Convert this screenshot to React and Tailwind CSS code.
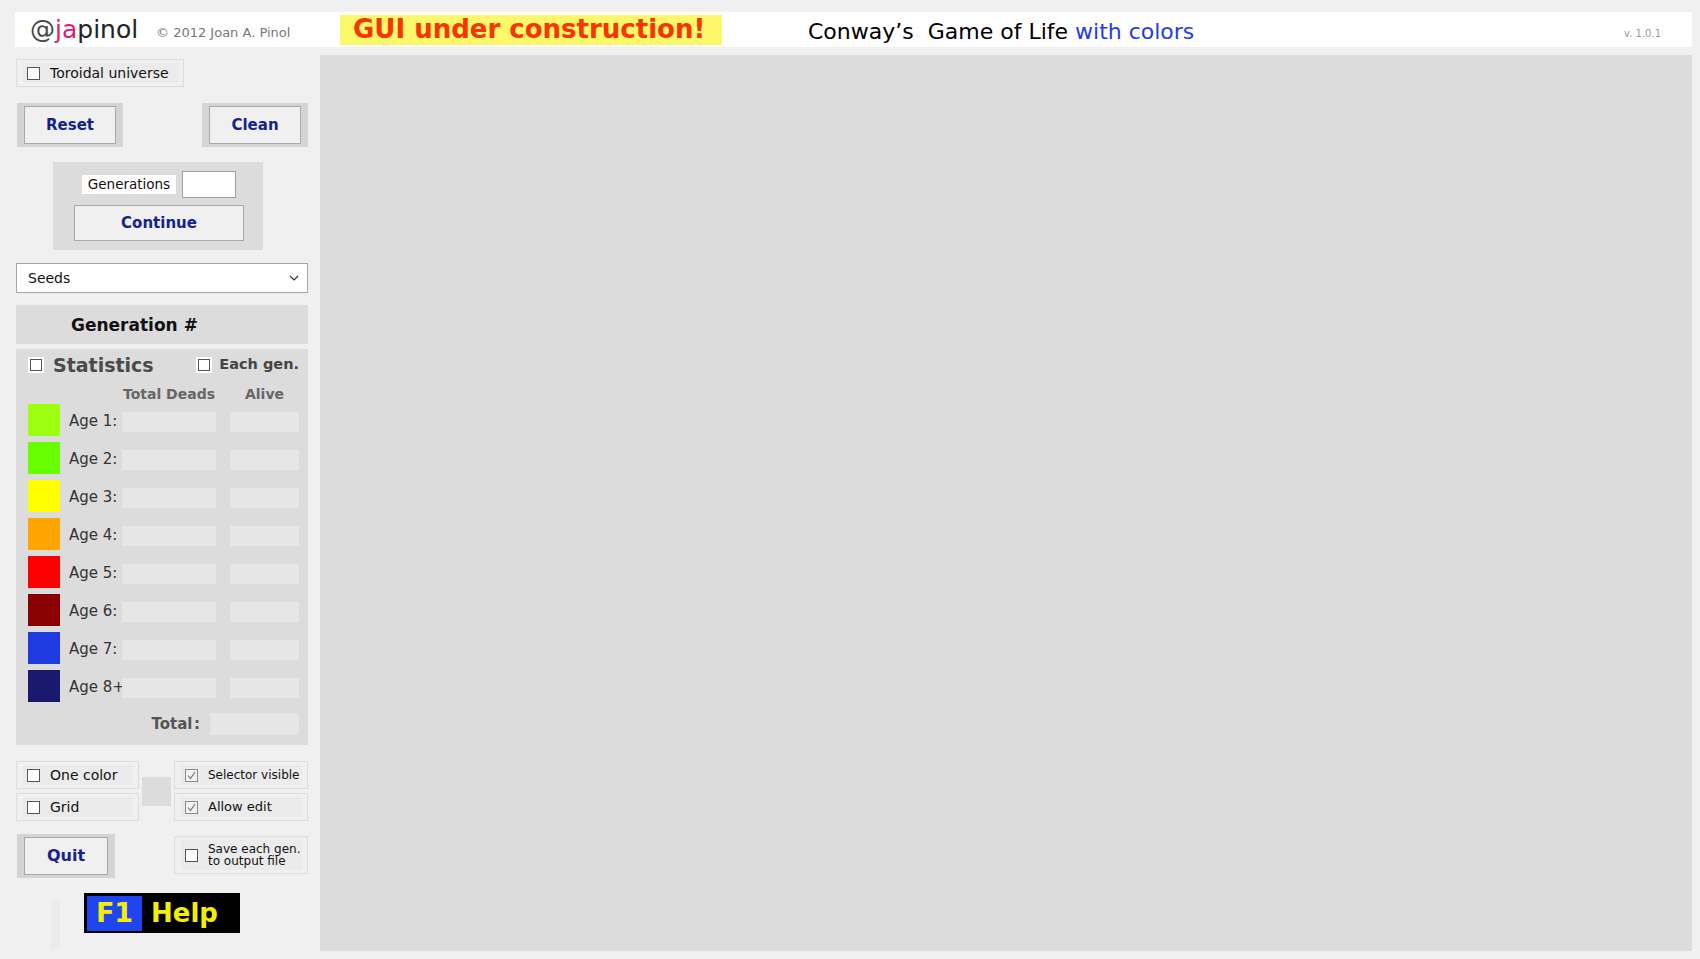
import React from 'react';

const ages = [
  { label: 'Age 1:', color: 'bg-[#9cff10]' },
  { label: 'Age 2:', color: 'bg-[#66ff00]' },
  { label: 'Age 3:', color: 'bg-[#ffff00]' },
  { label: 'Age 4:', color: 'bg-[#ffa500]' },
  { label: 'Age 5:', color: 'bg-[#ff0000]' },
  { label: 'Age 6:', color: 'bg-[#8b0000]' },
  { label: 'Age 7:', color: 'bg-[#1e3ae0]' },
  { label: 'Age 8+', color: 'bg-[#191970]' },
];

const Box = ({ checked }) =>
  checked ? (
    <span className="flex h-[13px] w-[13px] shrink-0 items-center justify-center border border-[#8a8a8a] bg-[#f2f2f2]">
      <svg width="9" height="9" viewBox="0 0 9 9" fill="none">
        <path d="M1 4.5 L3.5 7.5 L8 1" stroke="#6f6f6f" strokeWidth="1.1" />
      </svg>
    </span>
  ) : (
    <span className="block h-[13px] w-[13px] shrink-0 border border-[#555] bg-white" />
  );

const CheckOption = ({ checked, children, className = '', textClass = 'text-[14px]' }) => (
  <div className={`border border-[#dcdcdc] bg-[#f0f0f0] p-[3px] pl-[6px] pr-[5px] ${className}`}>
    <div className="flex h-full items-center bg-[#ebebeb] pl-[4px]">
      <Box checked={checked} />
      <span className={`ml-[10px] leading-[12px] text-[#111] ${textClass}`}>{children}</span>
    </div>
  </div>
);

const Button = ({ children, className = '' }) => (
  <div className={`flex items-center justify-center border border-[#a9a9a9] bg-[#f0f0f0] text-[15px] font-bold text-[#14238c] ${className}`}>
    {children}
  </div>
);

const WhiteCheck = () => (
  <span className="flex h-4 w-4 items-center justify-center bg-white">
    <span className="block h-[12px] w-[12px] border border-[#555]" />
  </span>
);

export default function App() {
  return (
    <div className="min-h-screen bg-[#f0f0f0] pl-[15px] pr-[8px] pt-3 font-['DejaVu_Sans',sans-serif] text-[#111]">
      {/* Header */}
      <div className="flex h-[35px] items-center bg-white pr-[31px]">
        <div className="w-[141px] pl-[15px] text-[25px] leading-none text-[#222]">
          <span className="text-[#444]">@</span>
          <span className="text-[#e8196b]">ja</span>pinol
        </div>
        <div className="w-[184px] pt-[6px] text-[13px] text-[#777]">© 2012 Joan A. Pinol</div>
        <div className="flex h-[30px] w-[382px] items-center bg-[#fcf86a] pl-[13px] text-[26px] font-bold text-[#f83400]">
          GUI under construction!
        </div>
        <div className="ml-[86px] pt-[4px] text-[22px] text-black">
          Conway’s&nbsp; Game of Life <span className="text-[#1f3ce6]">with colors</span>
        </div>
        <div className="ml-auto pt-[8px] text-[10px] text-[#999]">v. 1.0.1</div>
      </div>

      {/* Body */}
      <div className="mt-2 flex">
        {/* Left panel */}
        <div className="ml-[1px] flex w-[292px] shrink-0 flex-col">
          <CheckOption className="mt-[4px] h-[28px] w-[168px]">Toroidal universe</CheckOption>

          <div className="mt-[16px] flex justify-between">
            <div className="ml-[1px] h-[44px] w-[106px] bg-[#d4d4d4] px-[7px] py-[3px]">
              <Button className="h-full">Reset</Button>
            </div>
            <div className="h-[44px] w-[106px] bg-[#d4d4d4] px-[7px] py-[3px]">
              <Button className="h-full">Clean</Button>
            </div>
          </div>

          <div className="ml-[37px] mt-[15px] w-[210px] bg-[#dcdcdc] pb-[9px] pt-[9px]">
            <div className="flex h-[27px] items-center pl-[29px]">
              <span className="flex h-[19px] w-[94px] items-center justify-center bg-white text-[13.5px]">Generations</span>
              <span className="ml-[6px] h-[27px] w-[54px] border border-[#a0a0a0] bg-white" />
            </div>
            <Button className="ml-[21px] mt-[7px] h-[36px] w-[170px]">Continue</Button>
          </div>

          <div className="mt-[13px] flex h-[30px] items-center justify-between border border-[#a5a5a5] bg-white pl-[11px] pr-[8px] text-[14px]">
            <span>Seeds</span>
            <svg width="10" height="6" viewBox="0 0 10 6" fill="none">
              <path d="M1 1 L5 5 L9 1" stroke="#333" strokeWidth="1.2" />
            </svg>
          </div>

          <div className="mt-[12px] flex h-[39px] items-center bg-[#dcdcdc] pl-[55px] pt-[3px] text-[17px] font-bold text-[#111]">
            Generation #
          </div>

          {/* Statistics */}
          <div className="mt-[5px] bg-[#dcdcdc] pb-[10px] pl-[12px] pr-[9px] pt-[8px]">
            <div className="flex h-4 items-center">
              <WhiteCheck />
              <span className="ml-[9px] text-[19px] font-bold text-[#4a4a4a]">Statistics</span>
              <span className="ml-auto flex items-center">
                <WhiteCheck />
                <span className="ml-[7px] text-[14.5px] font-bold text-[#444]">Each gen.</span>
              </span>
            </div>
            <div className="flex h-[31px] items-end pb-[1px] pl-[94px] text-[14px] font-bold leading-[17px] text-[#666]">
              <span className="w-[94px] text-center">Total Deads</span>
              <span className="ml-[14px] w-[69px] text-center">Alive</span>
            </div>
            <div className="flex flex-col gap-[6px]">
              {ages.map((a) => (
                <div key={a.label} className="flex h-8 items-start">
                  <span className={`h-8 w-8 ${a.color}`} />
                  <span className="ml-[9px] mt-[8px] w-[53px] whitespace-nowrap text-[15px] leading-[18px] text-[#333]">
                    {a.label}
                  </span>
                  <span className="mt-[8px] h-5 w-[94px] bg-[#e6e6e6]" />
                  <span className="ml-[14px] mt-[8px] h-5 w-[69px] bg-[#e6e6e6]" />
                </div>
              ))}
            </div>
            <div className="mt-[11px] flex h-[22px] items-center justify-end">
              <span className="text-[15px] font-bold text-[#555]">Total&#8202;:</span>
              <span className="ml-[10px] h-[22px] w-[89px] bg-[#e6e6e6]" />
            </div>
          </div>

          {/* Options */}
          <div className="mt-[16px] flex">
            <div className="flex w-[123px] flex-col gap-[4px]">
              <CheckOption className="h-[28px]">One color</CheckOption>
              <CheckOption className="h-[28px]">Grid</CheckOption>
            </div>
            <span className="ml-[3px] h-[29px] w-[29px] self-center bg-[#dcdcdc]" />
            <div className="ml-[3px] flex w-[134px] flex-col gap-[4px]">
              <CheckOption checked className="h-[28px]" textClass="text-[12px]">Selector visible</CheckOption>
              <CheckOption checked className="h-[28px]" textClass="text-[13px]">Allow edit</CheckOption>
            </div>
          </div>

          <div className="mt-[13px] flex items-start">
            <div className="ml-[1px] h-[44px] w-[98px] bg-[#d4d4d4] px-[7px] py-[3px]">
              <Button className="h-full text-[16px]">Quit</Button>
            </div>
            <CheckOption className="ml-auto mt-[2px] h-[38px] w-[134px]" textClass="text-[12px]">
              Save each gen.
              <br />
              to output file
            </CheckOption>
          </div>

          <div className="mt-[15px] flex items-start">
            <span className="ml-[35px] mt-[8px] h-[48px] w-[9px] bg-[#ebebeb]" />
            <div className="ml-[24px] flex h-[40px] w-[156px] items-center bg-black pl-[3px]">
              <span className="flex h-[35px] w-[55px] items-center justify-center bg-[#1f45f0] text-[27px] font-bold text-[#f3ef00]">
                F1
              </span>
              <span className="ml-[9px] text-[26px] font-bold text-[#f3ef00]">Help</span>
            </div>
          </div>
        </div>

        {/* Canvas */}
        <div className="ml-[12px] h-[896px] flex-1 bg-[#dcdcdc]" />
      </div>
    </div>
  );
}
